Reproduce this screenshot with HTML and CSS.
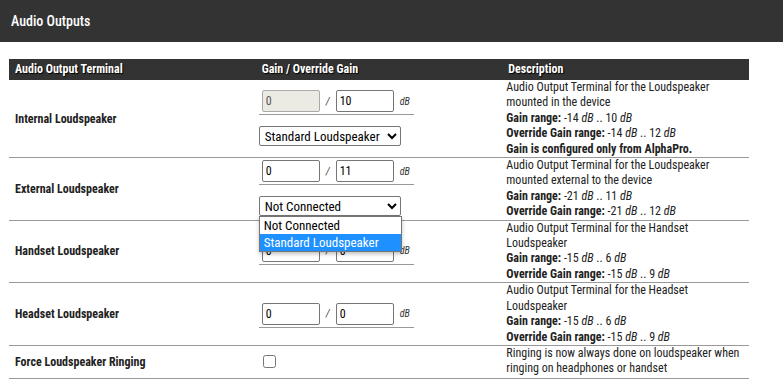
FILE: index.html
```html
<!DOCTYPE html>
<html>
<head>
<meta charset="utf-8">
<title>Audio Outputs</title>
<link rel="stylesheet" href="styles.css">
</head>
<body>
<div class="titlebar">Audio Outputs</div>
<div class="content">
  <div class="grid">
    <div class="row head">
      <div class="hc">Audio Output Terminal</div>
      <div class="hc">Gain / Override Gain</div>
      <div class="hc">Description</div>
    </div>

    <div class="row">
      <div class="label">Internal Loudspeaker</div>
      <div class="gain">
        <div class="inner">
          <div class="ins">
            <input class="num" type="text" value="0" disabled>
            <span class="slash">/</span>
            <input class="num" type="text" value="10">
            <span class="db">dB</span>
          </div>
          <div class="sel">
            <select class="choice"><option>Standard Loudspeaker</option><option>Not Connected</option></select>
          </div>
        </div>
      </div>
      <div class="desc">Audio Output Terminal for the Loudspeaker<br>mounted in the device<br><b>Gain range:</b> -14 <i>dB</i> .. 10 <i>dB</i><br><b>Override Gain range:</b> -14 <i>dB</i> .. 12 <i>dB</i><br><b>Gain is configured only from AlphaPro.</b></div>
    </div>

    <div class="row">
      <div class="label">External Loudspeaker</div>
      <div class="gain">
        <div class="inner">
          <div class="ins">
            <input class="num" type="text" value="0">
            <span class="slash">/</span>
            <input class="num" type="text" value="11">
            <span class="db">dB</span>
          </div>
          <div class="sel">
            <div class="selwrap">
              <select class="choice"><option>Not Connected</option><option>Standard Loudspeaker</option></select>
              <div class="popup">
                <div class="opt">Not Connected</div>
                <div class="opt active">Standard Loudspeaker</div>
              </div>
            </div>
          </div>
        </div>
      </div>
      <div class="desc">Audio Output Terminal for the Loudspeaker<br>mounted external to the device<br><b>Gain range:</b> -21 <i>dB</i> .. 11 <i>dB</i><br><b>Override Gain range:</b> -21 <i>dB</i> .. 12 <i>dB</i></div>
    </div>

    <div class="row">
      <div class="label">Handset Loudspeaker</div>
      <div class="gain">
        <div class="inner">
          <div class="ins">
            <input class="num" type="text" value="0">
            <span class="slash">/</span>
            <input class="num" type="text" value="0">
            <span class="db">dB</span>
          </div>
        </div>
      </div>
      <div class="desc">Audio Output Terminal for the Handset<br>Loudspeaker<br><b>Gain range:</b> -15 <i>dB</i> .. 6 <i>dB</i><br><b>Override Gain range:</b> -15 <i>dB</i> .. 9 <i>dB</i></div>
    </div>

    <div class="row">
      <div class="label">Headset Loudspeaker</div>
      <div class="gain">
        <div class="inner">
          <div class="ins">
            <input class="num" type="text" value="0">
            <span class="slash">/</span>
            <input class="num" type="text" value="0">
            <span class="db">dB</span>
          </div>
        </div>
      </div>
      <div class="desc">Audio Output Terminal for the Headset<br>Loudspeaker<br><b>Gain range:</b> -15 <i>dB</i> .. 6 <i>dB</i><br><b>Override Gain range:</b> -15 <i>dB</i> .. 9 <i>dB</i></div>
    </div>

    <div class="row last">
      <div class="label">Force Loudspeaker Ringing</div>
      <div class="gain">
        <input class="check" type="checkbox">
      </div>
      <div class="desc">Ringing is now always done on loudspeaker when<br>ringing on headphones or handset</div>
    </div>
  </div>
</div>
</body>
</html>
```
FILE: styles.css
```css
* { box-sizing: border-box; }
body {
  margin: 0;
  background: #fff;
  font-family: "Roboto Condensed", Roboto, "Liberation Sans", sans-serif;
  font-stretch: 87.5%;
  color: #222;
  font-size: 12px;
}
.titlebar {
  width: 783px;
  height: 42px;
  background: #333;
  color: #fff;
  font-size: 14px;
  font-weight: 500;
  line-height: 42px;
  padding-left: 11px;
}
.content {
  padding: 17px 9px 0 9px;
}
.grid {
  width: 740px;
}
.row {
  display: grid;
  grid-template-columns: 1fr 1fr 1fr;
  border-bottom: 1px solid #999;
}
.row.head {
  background: #333;
  height: 21px;
  border-bottom: none;
}
.hc {
  color: #fff;
  font-weight: 700;
  line-height: 21px;
  padding-left: 6px;
  text-shadow: 1px 1px 1px #000;
}
.label {
  font-weight: 700;
  align-self: center;
  padding-left: 6px;
}
.gain {
  align-self: center;
  padding-left: 3px;
}
.desc {
  line-height: 15.4px;
  white-space: nowrap;
  padding-left: 4px;
  color: #222;
}
.row.last .desc { padding-bottom: 1px; }
.inner { width: 155px; }
.ins {
  display: flex;
  align-items: center;
  padding: 2px 0 2px 3px;
  border-bottom: 1px solid #999;
}
.num {
  width: 58px;
  height: 22px;
  border: 1px solid #767676;
  border-radius: 2px;
  padding: 1px 3px;
  font-family: inherit;
  font-stretch: inherit;
  font-size: 12px;
  color: #000;
  background: #fff;
  margin: 0;
}
.num:disabled {
  background: #ebebe4;
  border-color: #aaa;
  color: #555;
}
.slash {
  width: 16px;
  text-align: center;
  color: #444;
  font-style: italic;
  font-size: 11px;
}
.db {
  margin-left: 6px;
  font-style: italic;
  font-size: 10px;
  color: #333;
}
.sel {
  padding: 11px 0 3px 0;
}
.selwrap {
  position: relative;
  width: 142px;
}
.choice {
  width: 142px;
  height: 20px;
  font-family: inherit;
  font-stretch: inherit;
  font-size: 13px;
  color: #000;
  border: 1px solid #767676;
  border-radius: 2px;
  background: #fff;
  margin: 0;
  padding: 0 1px;
}
.popup {
  position: absolute;
  top: 20px;
  left: 0;
  width: 143px;
  border: 1px solid #767676;
  background: #fff;
  box-shadow: 0 2px 4px rgba(0,0,0,0.25);
  z-index: 5;
  padding: 0;
}
.opt {
  height: 17px;
  line-height: 17px;
  font-size: 13px;
  color: #000;
  padding-left: 4px;
}
.opt.active {
  background: #1e90ff;
  color: #fff;
}
.check {
  width: 13px;
  height: 13px;
  margin: 3px 0 3px 4px;
  display: block;
}
```
